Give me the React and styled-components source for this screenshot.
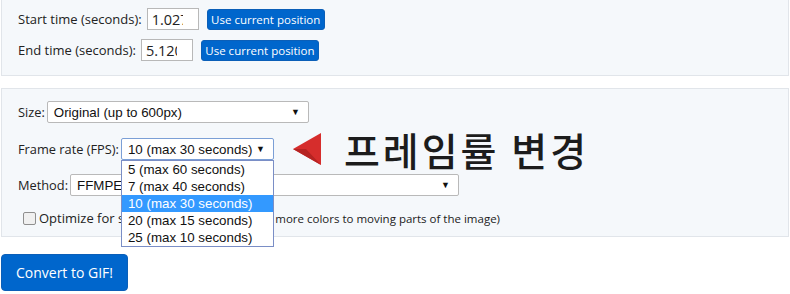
import styled, { createGlobalStyle } from "styled-components";

const Global = createGlobalStyle`
  body {
    margin: 0;
    background: #fff;
    font-family: "Open Sans", "Noto Sans", sans-serif;
    color: #222;
  }
`;

const options = [
  "5 (max 60 seconds)",
  "7 (max 40 seconds)",
  "10 (max 30 seconds)",
  "20 (max 15 seconds)",
  "25 (max 10 seconds)",
];

export default function App() {
  return (
    <Page>
      <Global />
      <Panel $top>
        <Row>
          <Label $space={5}>Start time (seconds):</Label>
          <TimeInput>
            <InputText>1.027</InputText>
          </TimeInput>
          <BlueButton>Use current position</BlueButton>
        </Row>
        <Row>
          <Label $space={5}>End time (seconds):</Label>
          <TimeInput>
            <InputText>5.120</InputText>
          </TimeInput>
          <BlueButton>Use current position</BlueButton>
        </Row>
      </Panel>

      <Panel $second>
        <FormRow>
          <Label $small>Size:</Label>
          <Select $width={262}>
            <span>Original (up to 600px)</span>
            <Arrow>▼</Arrow>
          </Select>
        </FormRow>
        <FormRow $gap={15} $front>
          <Label $small>Frame rate (FPS):</Label>
          <DropWrap>
            <Select $width={153} $focused>
              <span>10 (max 30 seconds)</span>
              <Arrow>▼</Arrow>
            </Select>
            <List>
              {options.map((o, i) => (
                <Option key={o} $active={i === 2}>
                  {o}
                </Option>
              ))}
            </List>
          </DropWrap>
          <Pointer width="28" height="32" viewBox="0 0 28 32">
            <polygon points="0,16 28,0 28,32" fill="#d62d2c" />
            <polygon points="0,16 13,16 28,32" fill="#b52322" />
          </Pointer>
          <Note>프레임률 변경</Note>
        </FormRow>
        <FormRow $gap={14}>
          <Label $small>Method:</Label>
          <Select $width={389}>
            <span>FFMPEG</span>
            <Arrow>▼</Arrow>
          </Select>
        </FormRow>
        <CheckRow>
          <Box />
          <span>Optimize for static background</span>
          <Small>(assigns more colors to moving parts of the image)</Small>
        </CheckRow>
      </Panel>

      <ConvertButton>Convert to GIF!</ConvertButton>
    </Page>
  );
}

const Page = styled.div`
  padding: 0 1px;
`;

const Panel = styled.div`
  background: #f5f8fb;
  border: 1px solid #e1e5ea;
  border-top: ${(p) => (p.$top ? "none" : "1px solid #e1e5ea")};
  padding: ${(p) => (p.$top ? "8px 16px 14px" : "12px 16px 8px")};
  margin-top: ${(p) => (p.$second ? "12px" : "0")};
  display: flex;
  flex-direction: column;
  gap: ${(p) => (p.$top ? "9px" : "0")};
`;

const Row = styled.div`
  display: flex;
  align-items: center;
  height: 22px;
`;

const FormRow = styled.div`
  display: flex;
  align-items: center;
  height: 22px;
  margin-top: ${(p) => p.$gap || 0}px;
  position: relative;
  z-index: ${(p) => (p.$front ? 2 : 1)};
`;

const Label = styled.span`
  font-size: ${(p) => (p.$small ? "12.8px" : "13px")};
  color: #222;
  margin-right: ${(p) => p.$space || 2}px;
  white-space: nowrap;
`;

const TimeInput = styled.div`
  box-sizing: border-box;
  width: 52px;
  height: 22px;
  background: #fff;
  border: 1px solid #b8b8b8;
  padding: 0 0 0 4px;
  display: flex;
  align-items: center;
`;

const InputText = styled.span`
  width: 31px;
  overflow: hidden;
  white-space: nowrap;
  font-size: 14.5px;
  color: #222;
`;

const BlueButton = styled.button`
  margin-left: 8px;
  height: 21px;
  width: 118px;
  padding: 0;
  background: #0066cc;
  color: #fff;
  border: 1px solid #0b5fb8;
  border-radius: 3px;
  font-family: "Open Sans", "Noto Sans", sans-serif;
  font-size: 11.5px;
`;

const Select = styled.div`
  box-sizing: border-box;
  width: ${(p) => p.$width}px;
  height: 22px;
  background: #fff;
  border: 1px solid ${(p) => (p.$focused ? "#7b9fd6" : "#b9b9b9")};
  border-radius: 2px;
  display: flex;
  align-items: center;
  padding: 0 6px;
  font-family: "Liberation Sans", Arial, sans-serif;
  font-size: 13.33px;
  color: #111;
  overflow: hidden;
  white-space: nowrap;
`;

const Arrow = styled.span`
  margin-left: auto;
  font-size: 9px;
  color: #111;
  padding-right: 2px;
`;

const DropWrap = styled.div`
  position: relative;
`;

const List = styled.div`
  position: absolute;
  top: 22px;
  left: 0;
  box-sizing: border-box;
  width: 153px;
  background: #fff;
  border: 1px solid #7a8ec6;
  z-index: 5;
`;

const Option = styled.div`
  height: 17px;
  line-height: 17px;
  padding-left: 6px;
  font-family: "Liberation Sans", Arial, sans-serif;
  font-size: 13.33px;
  background: ${(p) => (p.$active ? "#3399ff" : "#fff")};
  color: ${(p) => (p.$active ? "#fff" : "#111")};
  white-space: nowrap;
`;

const Pointer = styled.svg`
  margin-left: 19px;
  flex: none;
`;

const Note = styled.span`
  margin-left: 23px;
  font-family: "Noto Sans CJK KR", sans-serif;
  font-size: 39px;
  font-weight: 500;
  letter-spacing: 3px;
  color: #1c1c1c;
  white-space: nowrap;
  line-height: 1;
`;

const CheckRow = styled.div`
  display: flex;
  align-items: center;
  height: 20px;
  margin-top: 12px;
  font-size: 13px;
  white-space: nowrap;
`;

const Box = styled.span`
  box-sizing: border-box;
  width: 13px;
  height: 13px;
  border: 1px solid #8f8f8f;
  border-radius: 2px;
  background: #f0f0f0;
  margin: 0 3px 0 5px;
`;

const Small = styled.span`
  font-size: 11.5px;
  margin-left: 4px;
`;

const ConvertButton = styled.button`
  margin-top: 17px;
  height: 37px;
  width: 127px;
  padding: 0;
  background: #0066cc;
  border: 1px solid #0b5fb8;
  border-radius: 4px;
  color: #fff;
  font-family: "Open Sans", "Noto Sans", sans-serif;
  font-size: 14px;
`;
